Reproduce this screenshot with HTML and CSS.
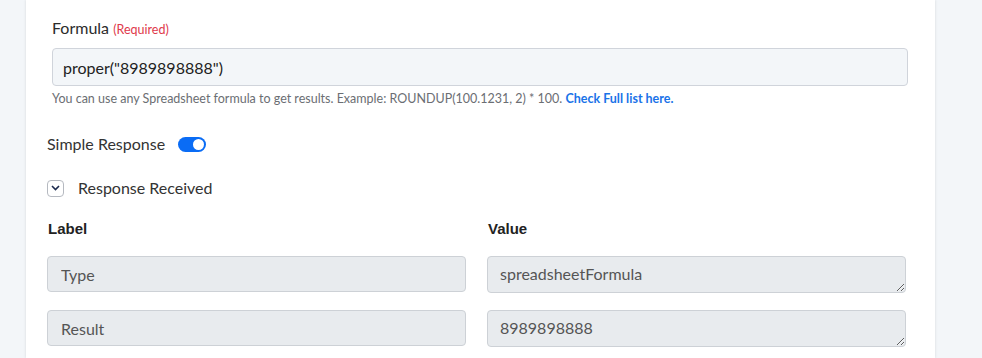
FILE: index.html
```html
<!DOCTYPE html>
<html lang="en">
<head>
  <meta charset="UTF-8" />
  <meta name="viewport" content="width=device-width, initial-scale=1.0"/>
  <title>Spreadsheet Formula</title>
  <link rel="stylesheet" href="styles.css">
</head>
<body>
  <div class="card">
    <div class="field">
      <label class="field-label">Formula <span class="required">(Required)</span></label>
      <input class="formula-input" type="text" value='proper("8989898888")'>
      <p class="help">You can use any Spreadsheet formula to get results. Example: ROUNDUP(100.1231, 2) * 100. <a href="#">Check Full list here.</a></p>
    </div>

    <div class="simple-row">
      <span>Simple Response</span>
      <span class="toggle"><span class="knob"></span></span>
    </div>

    <div class="received-row">
      <span class="chevron-box">
        <svg width="9" height="6" viewBox="0 0 9 6"><path d="M1 1l3.5 3.5L8 1" fill="none" stroke="#1d2b4f" stroke-width="1.6"/></svg>
      </span>
      <span>Response Received</span>
    </div>

    <div class="resp-grid">
      <div class="col-head">Label</div>
      <div class="col-head">Value</div>
      <input class="ro-input" type="text" value="Type" readonly>
      <textarea class="ro-area" readonly>spreadsheetFormula</textarea>
      <input class="ro-input" type="text" value="Result" readonly>
      <textarea class="ro-area" readonly>8989898888</textarea>
    </div>
  </div>
</body>
</html>
```

FILE: styles.css
```css
body {
  margin: 0;
  background: #f3f6f9;
  font-family: 'Lato', 'Noto Sans', sans-serif;
  color: #2b2b2b;
}
.card {
  margin-left: 26px;
  width: 909px;
  height: 358px;
  background: #fff;
  box-shadow: -1px 0 2px rgba(0,0,0,0.06), 1px 0 2px rgba(0,0,0,0.06);
  padding: 18px 29px 0 21px;
  box-sizing: border-box;
  overflow: hidden;
}
.field {
  padding-left: 5px;
  margin-right: -2px;
}
.field-label {
  display: block;
  font-size: 16px;
  line-height: 19px;
  color: #2b2b2b;
}
.required {
  font-size: 12.5px;
  color: #e0384b;
}
.formula-input {
  display: block;
  width: 100%;
  height: 38px;
  margin-top: 9px;
  box-sizing: border-box;
  border: 1px solid #d0d4db;
  border-radius: 4px;
  background: #f3f6f9;
  padding: 0 10px;
  font-family: 'Lato', sans-serif;
  font-size: 16px;
  color: #222;
  outline: none;
}
.help {
  margin: 5px 0 0;
  font-size: 12.5px;
  line-height: 16px;
  color: #6b6e73;
}
.help a {
  color: #1a73e8;
  font-weight: bold;
  text-decoration: none;
}
.simple-row {
  display: flex;
  align-items: center;
  gap: 13px;
  margin-top: 27px;
  font-size: 16px;
  line-height: 20px;
  color: #333;
}
.toggle {
  width: 28px;
  height: 15px;
  border-radius: 8px;
  background: #0a6cf5;
  display: flex;
  align-items: center;
  justify-content: flex-end;
  padding: 0 2px;
  box-sizing: border-box;
}
.knob {
  width: 11px;
  height: 11px;
  border-radius: 50%;
  background: #fff;
}
.received-row {
  display: flex;
  align-items: center;
  gap: 14px;
  margin-top: 24px;
  font-size: 16px;
  line-height: 20px;
  color: #333;
}
.chevron-box {
  width: 17px;
  height: 17px;
  box-sizing: border-box;
  border: 1px solid #b5b9c0;
  border-radius: 4px;
  display: flex;
  align-items: center;
  justify-content: center;
}
.resp-grid {
  display: grid;
  grid-template-columns: 419px 419px;
  column-gap: 21px;
  margin-top: 22px;
}
.col-head {
  font-family: 'Liberation Sans', Arial, sans-serif;
  font-weight: bold;
  font-size: 15px;
  line-height: 18px;
  color: #222;
  margin: 0 0 18px 1px;
}
.ro-input,
.ro-area {
  display: block;
  width: 100%;
  box-sizing: border-box;
  border: 1px solid #cdd1d6;
  border-radius: 4px;
  background: #e8ebee;
  font-family: 'Lato', sans-serif;
  font-size: 16px;
  color: #555;
  outline: none;
  margin-bottom: 17px;
}
.ro-input {
  height: 36px;
  padding: 0 13px;
}
.ro-area {
  height: 37px;
  padding: 7px 12px;
  line-height: 20px;
  resize: vertical;
}
```
